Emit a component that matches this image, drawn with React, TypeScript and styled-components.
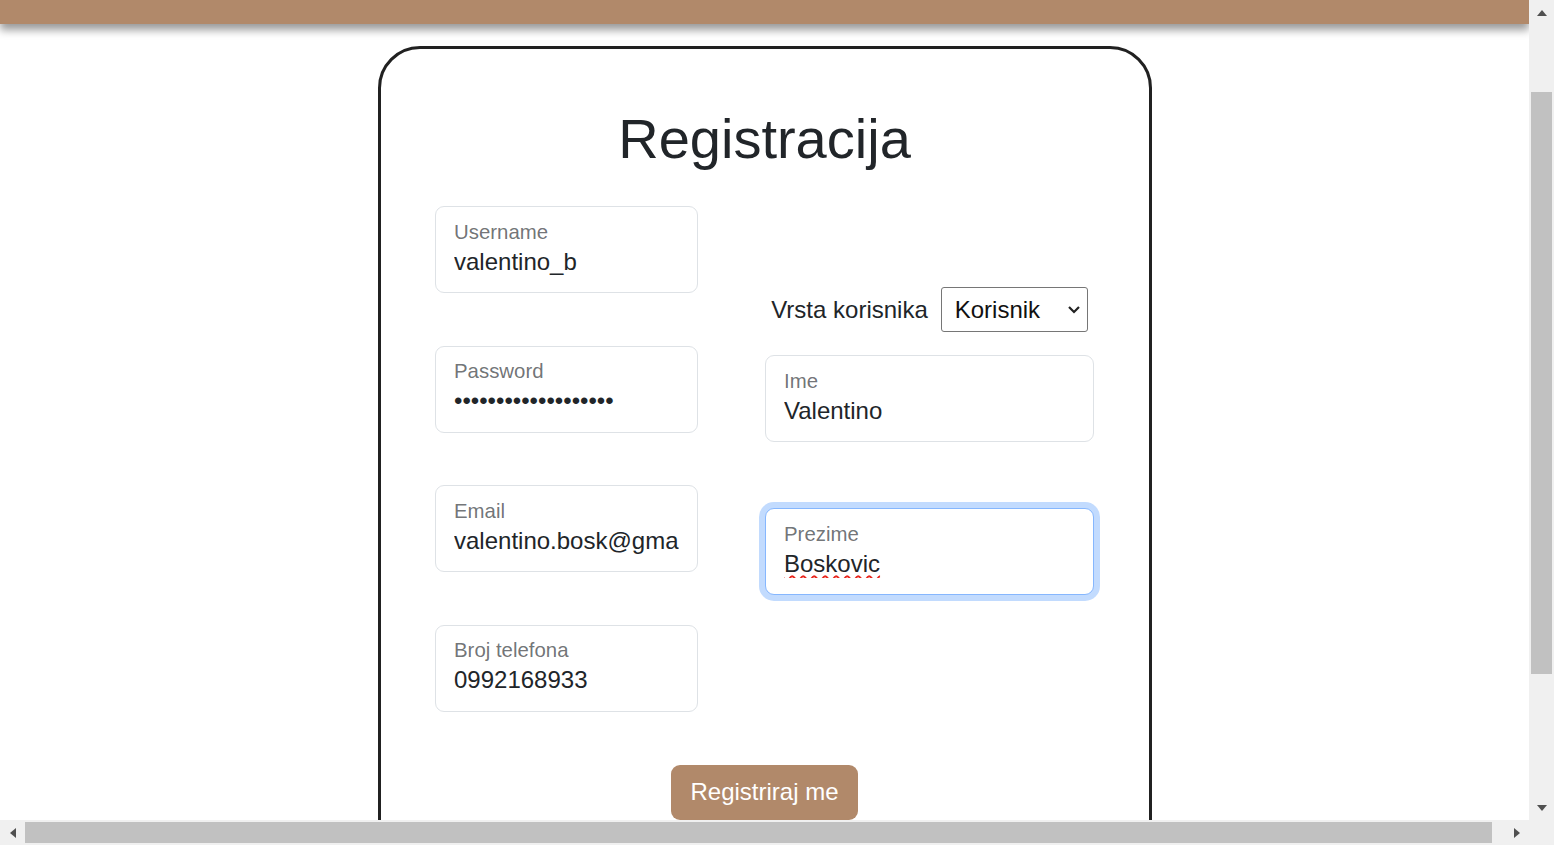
import styled, { createGlobalStyle } from 'styled-components';

const GlobalStyle = createGlobalStyle`
  html, body {
    margin: 0;
    padding: 0;
    overflow: hidden;
  }
  body {
    font-family: "Liberation Sans", Arial, sans-serif;
    color: #212529;
    background: #fff;
  }
`;

const BROWN = '#b1896a';

type FieldProps = {
  label: string;
  value: string;
  type?: string;
  focused?: boolean;
  misspelled?: boolean;
};

function FloatingField({ label, value, type = 'text', focused, misspelled }: FieldProps) {
  return (
    <Field $focused={focused}>
      <FloatLabel>{label}</FloatLabel>
      <Value type={type} value={value} readOnly $misspelled={misspelled} />
    </Field>
  );
}

function Arrow({ dir }: { dir: 'up' | 'down' | 'left' | 'right' }) {
  const points = {
    up: '0,6 5,0 10,6',
    down: '0,0 10,0 5,6',
    left: '6,0 6,10 0,5',
    right: '0,0 6,5 0,10',
  }[dir];
  const vertical = dir === 'up' || dir === 'down';
  return (
    <svg width={vertical ? 10 : 6} height={vertical ? 6 : 10} viewBox={vertical ? '0 0 10 6' : '0 0 6 10'}>
      <polygon points={points} fill="#505050" />
    </svg>
  );
}

export default function App() {
  return (
    <>
      <GlobalStyle />
      <Shell>
        <Main>
          <Header />
          <Card>
            <Title>Registracija</Title>
            <FormRow>
              <LeftCol>
                <FloatingField label="Username" value="valentino_b" />
                <FloatingField label="Password" type="password" value="valentinopassword12" />
                <FloatingField label="Email" value="valentino.bosk@gmail.com" />
                <FloatingField label="Broj telefona" value="0992168933" />
              </LeftCol>
              <RightCol>
                <TypeRow>
                  <TypeLabel>Vrsta korisnika</TypeLabel>
                  <SelectWrap>
                    <Select defaultValue="korisnik">
                      <option value="korisnik">Korisnik</option>
                      <option value="admin">Administrator</option>
                    </Select>
                    <Chevron width="14" height="9" viewBox="0 0 14 9">
                      <polyline points="2,2 7,7 12,2" fill="none" stroke="#222" strokeWidth="2.2" />
                    </Chevron>
                  </SelectWrap>
                </TypeRow>
                <Spaced $top={23}>
                  <FloatingField label="Ime" value="Valentino" />
                </Spaced>
                <Spaced $top={66}>
                  <FloatingField label="Prezime" value="Boskovic" focused misspelled />
                </Spaced>
              </RightCol>
            </FormRow>
            <ButtonRow>
              <SubmitButton type="button">Registriraj me</SubmitButton>
            </ButtonRow>
          </Card>
        </Main>

        <VScroll>
          <ArrowCell><Arrow dir="up" /></ArrowCell>
          <VTrack>
            <VThumb $offset={67} $size={582} />
          </VTrack>
          <ArrowCell><Arrow dir="down" /></ArrowCell>
        </VScroll>

        <HScroll>
          <ArrowCell><Arrow dir="left" /></ArrowCell>
          <HTrack>
            <HThumb $size={1467} />
          </HTrack>
          <ArrowCell><Arrow dir="right" /></ArrowCell>
        </HScroll>

        <Corner />
      </Shell>
    </>
  );
}

const Shell = styled.div`
  display: grid;
  grid-template-columns: 1fr 25px;
  grid-template-rows: 1fr 25px;
  width: 100vw;
  height: 100vh;
`;

const Main = styled.div`
  display: flex;
  flex-direction: column;
  overflow: hidden;
  background: #fff;
`;

const Header = styled.div`
  position: relative;
  z-index: 1;
  flex: 0 0 24px;
  background: ${BROWN};
  box-shadow: 0 6px 9px rgba(0, 0, 0, 0.4);
`;

const Card = styled.div`
  box-sizing: border-box;
  width: 774px;
  flex: 0 0 auto;
  margin: 22px auto 0;
  border: 3px solid #212121;
  border-radius: 42px;
  padding: 56px 0 60px;
`;

const Title = styled.h1`
  margin: 0;
  text-align: center;
  font-size: 56px;
  font-weight: 400;
  line-height: 1.2;
  color: #212529;
`;

const FormRow = styled.div`
  display: flex;
  justify-content: center;
  gap: 67px;
  margin-top: 34px;
`;

const LeftCol = styled.div`
  display: flex;
  flex-direction: column;
  gap: 52.5px;
  width: 263px;
`;

const RightCol = styled.div`
  display: flex;
  flex-direction: column;
  width: 329px;
  padding-top: 81px;
`;

const Spaced = styled.div<{ $top: number }>`
  margin-top: ${p => p.$top}px;
`;

const Field = styled.div<{ $focused?: boolean }>`
  box-sizing: border-box;
  height: 87px;
  padding: 12.5px 18px 0;
  background: #fff;
  border: 1.5px solid ${p => (p.$focused ? '#86b7fe' : '#dee2e6')};
  border-radius: 9px;
  box-shadow: ${p => (p.$focused ? '0 0 0 6px rgba(13, 110, 253, 0.25)' : 'none')};
`;

const FloatLabel = styled.span`
  display: block;
  font-size: 20.4px;
  line-height: 1.2;
  color: rgba(33, 37, 41, 0.65);
`;

const Value = styled.input<{ $misspelled?: boolean }>`
  display: block;
  box-sizing: border-box;
  width: 100%;
  margin: 2.5px 0 0;
  padding: 0;
  border: none;
  outline: none;
  background: transparent;
  font-family: "Liberation Sans", Arial, sans-serif;
  font-size: 24px;
  line-height: 1.2;
  height: 30px;
  color: #212529;
  text-decoration-line: ${p => (p.$misspelled ? 'underline' : 'none')};
  text-decoration-style: wavy;
  text-decoration-color: #e8251c;
  text-decoration-thickness: 1.5px;
  text-underline-offset: 3px;
`;

const TypeRow = styled.div`
  display: flex;
  align-items: center;
  justify-content: center;
  gap: 13px;
  height: 45px;
`;

const TypeLabel = styled.span`
  font-size: 24px;
  color: #212529;
`;

const SelectWrap = styled.div`
  position: relative;
  display: flex;
`;

const Select = styled.select`
  appearance: none;
  box-sizing: border-box;
  width: 147px;
  height: 45px;
  padding: 0 0 0 13px;
  border: 1.5px solid #767676;
  border-radius: 3px;
  background: #fff;
  font-family: "Liberation Sans", Arial, sans-serif;
  font-size: 24px;
  color: #111;
`;

const Chevron = styled.svg`
  position: absolute;
  right: 7px;
  top: 18px;
  pointer-events: none;
`;

const ButtonRow = styled.div`
  display: flex;
  justify-content: center;
  margin-top: 53px;
`;

const SubmitButton = styled.button`
  box-sizing: border-box;
  width: 187px;
  height: 55px;
  border: none;
  border-radius: 9px;
  background: ${BROWN};
  color: #fff;
  font-family: "Liberation Sans", Arial, sans-serif;
  font-size: 24px;
  cursor: pointer;
`;

const VScroll = styled.div`
  display: flex;
  flex-direction: column;
  background: #f0f0f0;
`;

const HScroll = styled.div`
  display: flex;
  background: #f0f0f0;
`;

const ArrowCell = styled.div`
  flex: 0 0 25px;
  display: flex;
  align-items: center;
  justify-content: center;
`;

const VTrack = styled.div`
  flex: 1;
  padding: 0 2px;
`;

const VThumb = styled.div<{ $offset: number; $size: number }>`
  margin-top: ${p => p.$offset}px;
  height: ${p => p.$size}px;
  background: #c1c1c1;
`;

const HTrack = styled.div`
  flex: 1;
  padding: 2px 0;
  display: flex;
`;

const HThumb = styled.div<{ $size: number }>`
  width: ${p => p.$size}px;
  background: #c1c1c1;
`;

const Corner = styled.div`
  background: #f0f0f0;
`;
